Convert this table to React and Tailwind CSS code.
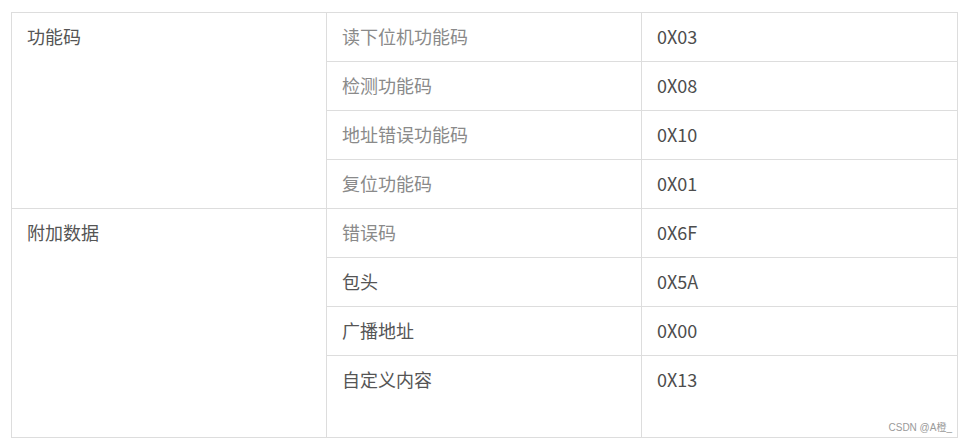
const rows = [
  { group: "功能码", span: 4, name: "读下位机功能码", code: "0X03", light: true },
  { name: "检测功能码", code: "0X08", light: true },
  { name: "地址错误功能码", code: "0X10", light: true },
  { name: "复位功能码", code: "0X01", light: true },
  { group: "附加数据", span: 4, name: "错误码", code: "0X6F", light: true },
  { name: "包头", code: "0X5A" },
  { name: "广播地址", code: "0X00" },
  { name: "自定义内容", code: "0X13", last: true },
];

export default function App() {
  return (
    <div
      className="w-[968px] h-[443px] bg-white pl-[11px] pt-[12px]"
      style={{ fontFamily: '"Noto Sans CJK SC", "Noto Sans", sans-serif' }}
    >
      <div className="relative w-[946px]">
        <table className="w-full border-collapse table-fixed text-[18px] leading-[24px]">
          <colgroup>
            <col className="w-[315px]" />
            <col className="w-[315px]" />
            <col className="w-[316px]" />
          </colgroup>
          <tbody>
            {rows.map((r, i) => {
              const pad = r.last ? "pt-[11px] pb-[46px]" : "pt-[11px] pb-[13px]";
              return (
                <tr key={i}>
                  {r.group && (
                    <td
                      rowSpan={r.span}
                      className="border border-[#dddddd] px-[15px] pt-[11px] align-top text-[#555555]"
                    >
                      {r.group}
                    </td>
                  )}
                  <td
                    className={`border border-[#dddddd] px-[15px] ${pad} align-top ${
                      r.light ? "text-[#8a8a8a]" : "text-[#555555]"
                    }`}
                  >
                    {r.name}
                  </td>
                  <td className={`border border-[#dddddd] px-[15px] ${pad} align-top text-[#4d4d4d]`}>
                    {r.code}
                  </td>
                </tr>
              );
            })}
          </tbody>
        </table>
        <span
          className="absolute right-[5px] bottom-[3px] text-[10px] leading-[14px] text-[#9a9a9a]"
          style={{ fontFamily: '"Liberation Sans", "Noto Sans CJK SC", sans-serif' }}
        >
          CSDN @A橙_
        </span>
      </div>
    </div>
  );
}
